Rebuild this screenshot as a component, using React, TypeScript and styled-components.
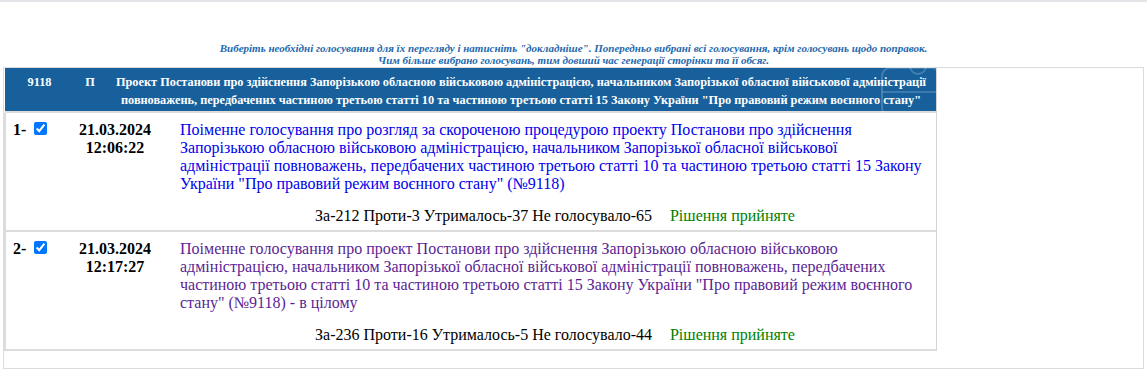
import React from 'react';
import styled, { createGlobalStyle } from 'styled-components';

const GlobalStyle = createGlobalStyle`
 html, body {
  margin: 0;
  padding: 0;
  background: #ffffff;
 }
 body {
  font-family: "Liberation Serif", "Times New Roman", serif;
  font-size: 16px;
  color: #000;
 }
`;

const TopLine = styled.div`
 height: 2px;
 background-color: #e4e4e8;
`;

const Notice = styled.div`
 padding-top: 40px;
 text-align: center;
 font-family: "Liberation Serif", serif;
 font-style: italic;
 font-weight: bold;
 font-size: 11px;
 line-height: 12px;
 color: #2468ad;
 margin-bottom: 1px;
`;

const OuterBox = styled.div`
 position: relative;
 margin: 0 3px;
 border: 1px solid #dcdcdc;
 height: 300px;
`;

const Table = styled.div`
 width: 932px;
 border-right: 1px solid #d4d4d4;
 border-bottom: 2px solid #dcdcdc;
`;

const Header = styled.div`
 display: grid;
 grid-template-columns: 69px 32px 1fr;
 background-color: #17609c;
 color: #ffffff;
 font-weight: bold;
 font-size: 12.3px;
 line-height: 18px;
 padding: 5px 0 2px;
 margin-left: 1px;
 border-bottom: 2px solid #dcdcdc;
`;

const HeadCell = styled.div`
 text-align: center;
`;

const Row = styled.div<{ $last?: boolean }>`
 display: grid;
 grid-template-columns: 55px 108px 1fr;
 border-left: 2px solid #dcdcdc;
 border-bottom: ${({ $last }) => ($last ? 'none' : '2px solid #dcdcdc')};
 padding: 8px 0 5px;
`;

const NumCell = styled.div`
 padding-left: 7px;
 font-weight: bold;
 white-space: nowrap;
 line-height: 18px;

 input {
  margin: 1px 3px 0 4px;
  vertical-align: top;
 }
`;

const DateCell = styled.div`
 text-align: center;
 font-weight: bold;
 line-height: 18px;
`;

const TextCell = styled.div`
 padding: 0 6px 0 11px;
 line-height: 18px;
`;

const VoteLink = styled.a<{ $visited?: boolean }>`
 color: ${({ $visited }) => ($visited ? '#5b1f95' : '#0000ee')};
 text-decoration: none;
`;

const Result = styled.div`
 margin-top: 14px;
 text-align: center;
 line-height: 18px;
`;

const Accepted = styled.span`
 color: #008000;
 margin-left: 18px;
`;

const Watermark = styled.svg`
 position: absolute;
 left: 876px;
 top: -8px;
 pointer-events: none;
`;

type Vote = {
 n: number;
 date: string;
 time: string;
 text: string;
 result: string;
 visited?: boolean;
};

const votes: Vote[] = [
 {
  n: 1,
  date: '21.03.2024',
  time: '12:06:22',
  text: 'Поіменне голосування про розгляд за скороченою процедурою проекту Постанови про здійснення Запорізькою обласною військовою адміністрацією, начальником Запорізької обласної військової адміністрації повноважень, передбачених частиною третьою статті 10 та частиною третьою статті 15 Закону України "Про правовий режим воєнного стану" (№9118)',
  result: 'За-212 Проти-3 Утрималось-37 Не голосувало-65',
 },
 {
  n: 2,
  date: '21.03.2024',
  time: '12:17:27',
  text: 'Поіменне голосування про проект Постанови про здійснення Запорізькою обласною військовою адміністрацією, начальником Запорізької обласної військової адміністрації повноважень, передбачених частиною третьою статті 10 та частиною третьою статті 15 Закону України "Про правовий режим воєнного стану" (№9118) - в цілому',
  result: 'За-236 Проти-16 Утрималось-5 Не голосувало-44',
  visited: true,
 },
];

export default function App() {
 return (
  <>
   <GlobalStyle />
   <TopLine />
   <Notice>
    Виберіть необхідні голосування для їх перегляду і натисніть "докладніше". Попередньо вибрані всі голосування, крім голосувань щодо поправок.
    <br />
    Чим більше вибрано голосувань, тим довший час генерації сторінки та її обсяг.
   </Notice>
   <OuterBox>
    <Table>
     <Header>
      <HeadCell>9118</HeadCell>
      <HeadCell>П</HeadCell>
      <HeadCell>
       Проект Постанови про здійснення Запорізькою обласною військовою адміністрацією, начальником Запорізької обласної військової адміністрації повноважень, передбачених частиною третьою статті 10 та частиною третьою статті 15 Закону України "Про правовий режим воєнного стану"
      </HeadCell>
     </Header>
     {votes.map((v, i) => (
      <Row key={v.n} $last={i === votes.length - 1}>
       <NumCell>
        {v.n}- <input type="checkbox" checked readOnly />
       </NumCell>
       <DateCell>
        {v.date}
        <br />
        {v.time}
       </DateCell>
       <TextCell>
        <VoteLink href="#" $visited={v.visited}>
         {v.text}
        </VoteLink>
        <Result>
         {v.result}
         <Accepted>Рішення прийняте</Accepted>
        </Result>
       </TextCell>
      </Row>
     ))}
    </Table>
    <Watermark width="62" height="60" viewBox="0 0 62 60">
     <rect x="2" y="8" width="58" height="48" rx="8" fill="none" stroke="rgba(255,255,255,0.2)" strokeWidth="2" />
     <circle cx="38" cy="6" r="8" fill="none" stroke="rgba(255,255,255,0.2)" strokeWidth="2" />
     <line x1="2" y1="32" x2="60" y2="32" stroke="rgba(255,255,255,0.16)" strokeWidth="2" />
    </Watermark>
   </OuterBox>
  </>
 );
}
